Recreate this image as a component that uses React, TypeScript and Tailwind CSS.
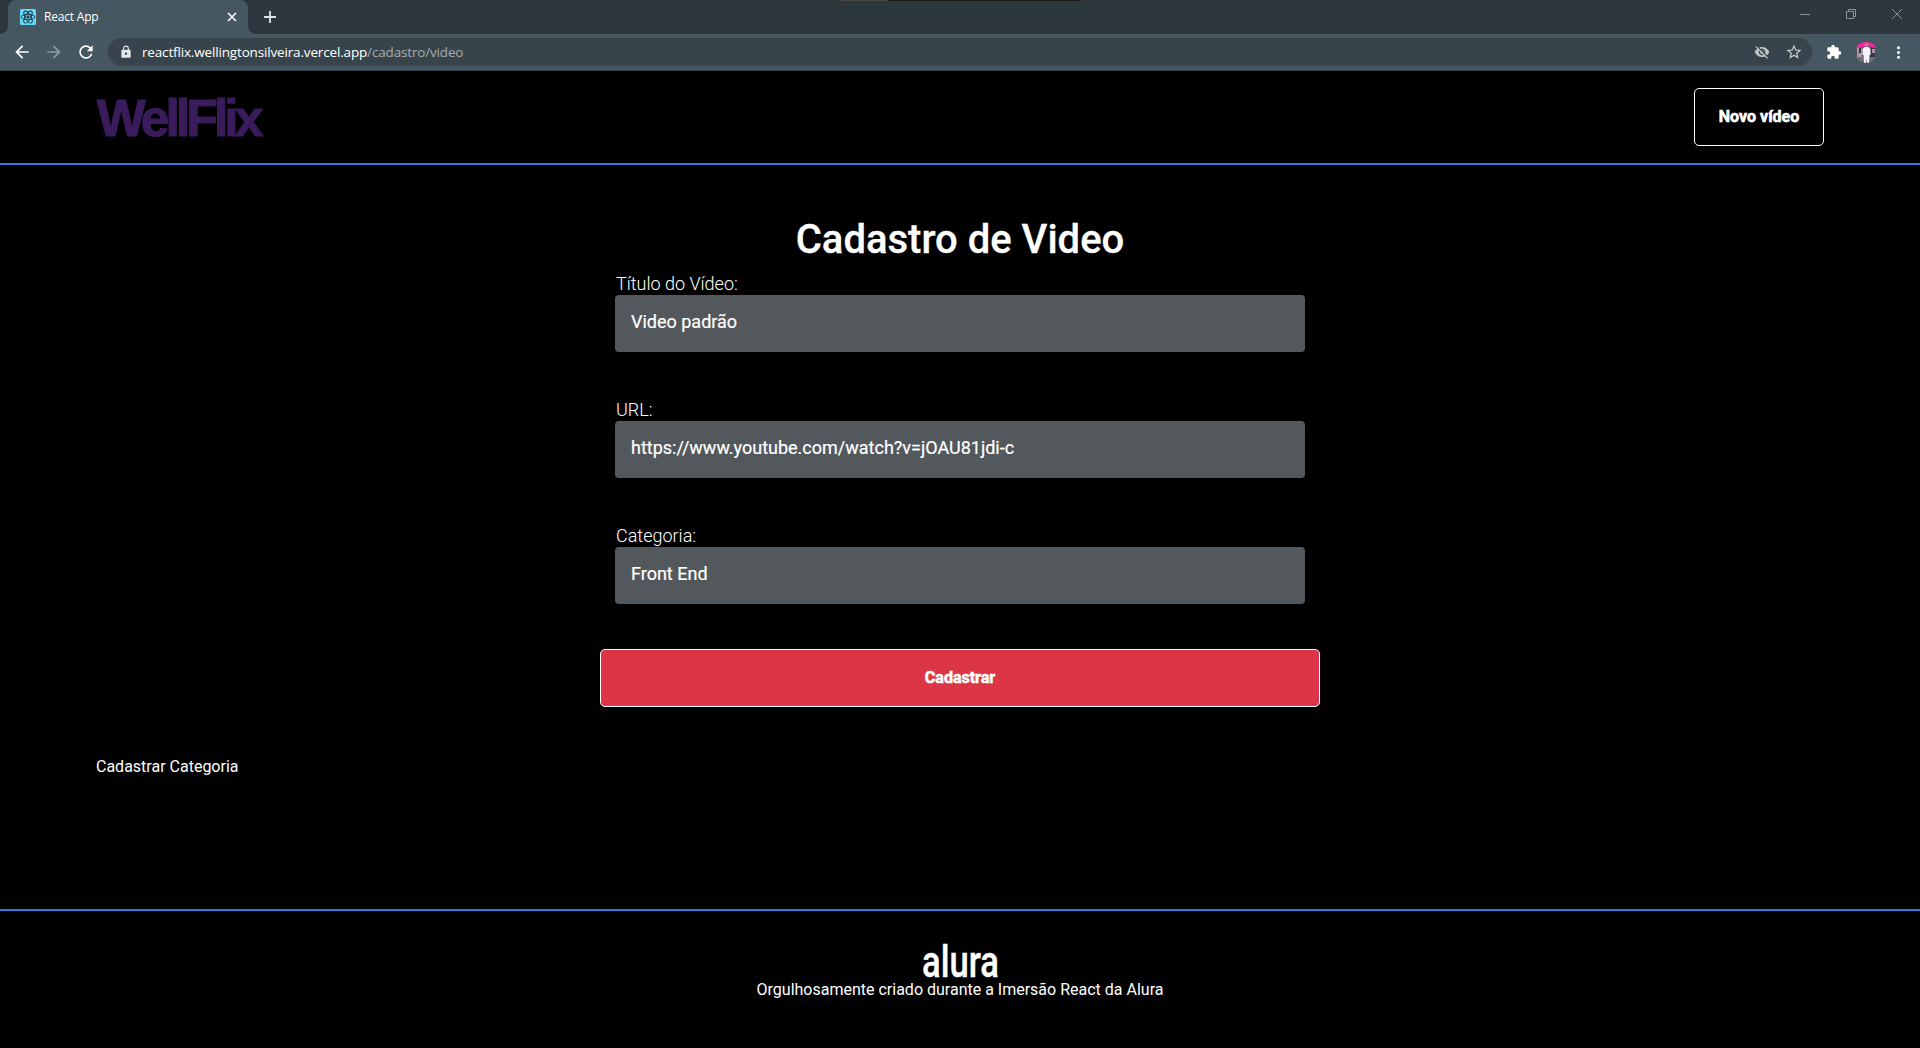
import React from 'react';
import { MdArrowBack, MdArrowForward, MdRefresh, MdLock, MdVisibilityOff, MdStarOutline, MdExtension, MdMoreVert } from 'react-icons/md';

const CHROME = "font-['Open_Sans','Noto_Sans',sans-serif]";

function ReactIcon() {
  return (
    <svg viewBox="0 0 16 16" className="size-4 shrink-0">
      <rect width="16" height="16" rx="1.5" fill="#61dafb" />
      <g fill="none" stroke="#20343c" strokeWidth="0.9">
        <ellipse cx="8" cy="8" rx="6.8" ry="2.7" />
        <ellipse cx="8" cy="8" rx="6.8" ry="2.7" transform="rotate(60 8 8)" />
        <ellipse cx="8" cy="8" rx="6.8" ry="2.7" transform="rotate(120 8 8)" />
        <circle cx="8" cy="8" r="1.1" fill="#20343c" />
      </g>
    </svg>
  );
}

function Avatar() {
  return (
    <svg viewBox="0 0 22 22" className="size-[22px]">
      <defs>
        <clipPath id="avatar"><circle cx="11" cy="11" r="11" /></clipPath>
      </defs>
      <g clipPath="url(#avatar)">
        <rect width="22" height="22" fill="#55505c" />
        <path d="M1 7C3-1 19-1 21 7l-4-1-4-1-4 1-5 1z" fill="#f02a9c" />
        <rect x="2" y="7" width="5" height="9" fill="#a39aa6" />
        <rect x="4" y="7" width="2" height="5" fill="#3b2a38" />
        <rect x="15" y="7" width="5" height="10" fill="#383748" />
        <rect x="17" y="8" width="3" height="4" fill="#a98fa3" />
        <rect x="0" y="16" width="22" height="6" fill="#6d6a74" />
        <circle cx="11.5" cy="4" r="1.8" fill="#b48a86" />
        <path d="M9.5 6h4l2 2v6h-1l-.5 8h-2l-.5-5-.5 5H9l-.5-8h-1V8z" fill="#f6f3fb" />
      </g>
    </svg>
  );
}

function TabStrip() {
  return (
    <div className="flex h-[34px] items-stretch bg-[#2d383e]">
      <div className="w-2 bg-[#455760]"><div className="h-full rounded-br-lg bg-[#2d383e]" /></div>
      <div className="flex w-[240px] items-center rounded-t-lg bg-[#455760] pl-3 pr-[11px]">
        <ReactIcon />
        <span className="ml-2 flex-1 text-[12px] tracking-[-0.2px] text-white">React App</span>
        <svg viewBox="0 0 10 10" className="size-[10px]" stroke="#fff" strokeWidth="1.6"><path d="M1 1l8 8M9 1L1 9" /></svg>
      </div>
      <div className="w-2 bg-[#455760]"><div className="h-full rounded-bl-lg bg-[#2d383e]" /></div>
      <svg viewBox="0 0 12 12" className="ml-2 size-3 self-center" stroke="#dfe2e4" strokeWidth="1.8"><path d="M6 0v12M0 6h12" /></svg>
      <div className="ml-[564px] flex h-px">
        <div className="w-12 bg-[#4b4846]" />
        <div className="w-[193px] bg-[#1d1b1c]" />
      </div>
      <div className="ml-auto flex items-start gap-9 pr-[18px] pt-[9px]">
        <svg viewBox="0 0 10 10" className="size-[10px]" stroke="#8b9296"><path d="M0 5.5h10" /></svg>
        <svg viewBox="0 0 10 10" className="size-[10px]" fill="none" stroke="#8b9296"><path d="M.5 2.5h7v7h-7zM2.5 2.5v-2h7v7h-2" /></svg>
        <svg viewBox="0 0 10 10" className="size-[10px]" stroke="#8b9296"><path d="M0 0l10 10M10 0L0 10" /></svg>
      </div>
    </div>
  );
}

function Toolbar() {
  return (
    <div className="flex h-[37px] items-center border-b border-[#34434a] bg-[#455760] pl-3">
      <MdArrowBack className="size-5 text-white" />
      <MdArrowForward className="ml-3 size-5 text-[#8f9a9f]" />
      <MdRefresh className="ml-3 size-5 text-white" />
      <div className="ml-3 flex h-7 w-[1704px] items-center rounded-full bg-[#38444b] pl-[11px] pr-[9px]">
        <MdLock className="size-[14px] text-[#e3e6e7]" />
        <span className="ml-[9px] text-[13.5px] tracking-[-0.16px] text-white">
          reactflix.wellingtonsilveira.vercel.app<span className="text-[#a3abaf]">/cadastro/video</span>
        </span>
        <MdVisibilityOff className="ml-auto size-4 text-[#c0c4c6]" />
        <MdStarOutline className="ml-[15px] size-[18px] text-[#c8cccd]" />
      </div>
      <MdExtension className="ml-3.5 size-4 text-white" />
      <div className="ml-[13px]"><Avatar /></div>
      <MdMoreVert className="ml-3 size-[19px] text-white" />
    </div>
  );
}

function Field({ label, value }: { label: string; value: string }) {
  return (
    <label className="flex h-[126px] w-[690px] flex-col">
      <span className="h-[22px] pl-px text-[18px] leading-[22px] font-light text-white">{label}</span>
      <span className="h-[57px] rounded-[4px] bg-[#53585d] pl-4 pt-4 text-[18px] leading-[21px] text-white [-webkit-text-stroke:0.2px_white]">{value}</span>
    </label>
  );
}

export default function App() {
  return (
    <div className="flex h-[1048px] w-[1920px] flex-col overflow-hidden bg-black font-['Roboto',sans-serif] text-white">
      <div className={CHROME}>
        <TabStrip />
        <Toolbar />
      </div>
      <header className="flex h-[94px] items-center justify-between border-b-2 border-[#2a7ae4] px-24">
        <span className="pl-px pt-px font-['Liberation_Sans',sans-serif] text-[51.5px] leading-[52px] font-bold tracking-[-3.9px] text-[#3a1b5c] [-webkit-text-stroke:1.2px_#3a1b5c]">WellFlix</span>
        <button className="h-[58px] w-[130px] rounded-[5px] border border-white text-[16px] font-bold [-webkit-text-stroke:0.6px_white]">Novo vídeo</button>
      </header>
      <main className="flex flex-1 flex-col px-24 pt-[51px]">
        <h1 className="text-center text-[40px] leading-[48px] font-medium [-webkit-text-stroke:0.3px_white]">Cadastro de Video</h1>
        <form className="mt-[9px] flex flex-col items-center">
          <Field label="Título do Vídeo:" value="Video padrão" />
          <Field label="URL:" value="https://www.youtube.com/watch?v=jOAU81jdi-c" />
          <Field label="Categoria:" value="Front End" />
          <button type="button" className="-mt-[2px] h-[58px] w-[720px] rounded-[5px] border border-white bg-[#dc3545] text-[16px] font-bold [-webkit-text-stroke:0.6px_white]">Cadastrar</button>
        </form>
        <a className="mt-[48px] text-[16px] leading-6">Cadastrar Categoria</a>
      </main>
      <footer className="flex h-[139px] flex-col items-center border-t-2 border-[#2a7ae4] pt-8">
        <svg width="76" height="35" className="overflow-visible" role="img" aria-label="alura">
          <text x="0" y="33.5" textLength="77" lengthAdjust="spacingAndGlyphs" fill="#fff" stroke="#fff" strokeWidth="0.4" fontFamily="Roboto" fontWeight="500" fontSize="45">alura</text>
        </svg>
        <p className="text-[16px] leading-6">Orgulhosamente criado durante a Imersão React da Alura</p>
      </footer>
    </div>
  );
}
